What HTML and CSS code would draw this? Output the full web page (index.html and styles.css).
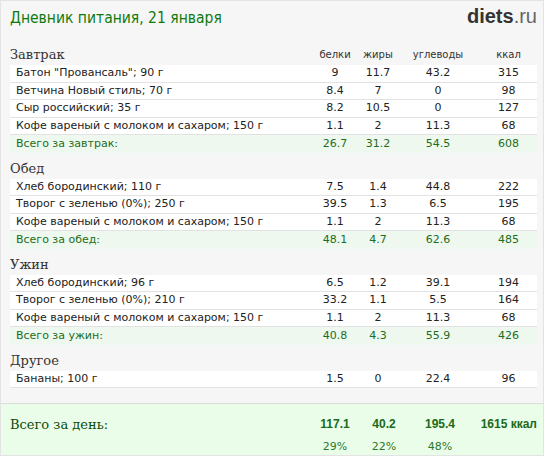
FILE: index.html
```html
<!DOCTYPE html>
<html lang="ru">
<head>
<meta charset="utf-8">
<title>Дневник питания</title>
<link rel="stylesheet" href="styles.css">
</head>
<body>
<div class="page">
  <div class="top">
    <div class="title">Дневник питания, 21 января</div>
    <div class="logo"><b>diets</b>.ru</div>
  </div>

  <div class="meal">
    <div class="head">
      <div class="name">Завтрак</div>
      <div class="col">белки</div><div class="col">жиры</div><div class="col">углеводы</div><div class="col">ккал</div>
    </div>
    <div class="row"><div class="food">Батон "Провансаль"; 90 г</div><div>9</div><div>11.7</div><div>43.2</div><div>315</div></div>
    <div class="row"><div class="food">Ветчина Новый стиль; 70 г</div><div>8.4</div><div>7</div><div>0</div><div>98</div></div>
    <div class="row"><div class="food">Сыр российский; 35 г</div><div>8.2</div><div>10.5</div><div>0</div><div>127</div></div>
    <div class="row"><div class="food">Кофе вареный с молоком и сахаром; 150 г</div><div>1.1</div><div>2</div><div>11.3</div><div>68</div></div>
    <div class="row sum"><div class="food">Всего за завтрак:</div><div>26.7</div><div>31.2</div><div>54.5</div><div>608</div></div>
  </div>

  <div class="meal">
    <div class="head"><div class="name">Обед</div></div>
    <div class="row"><div class="food">Хлеб бородинский; 110 г</div><div>7.5</div><div>1.4</div><div>44.8</div><div>222</div></div>
    <div class="row"><div class="food">Творог с зеленью (0%); 250 г</div><div>39.5</div><div>1.3</div><div>6.5</div><div>195</div></div>
    <div class="row"><div class="food">Кофе вареный с молоком и сахаром; 150 г</div><div>1.1</div><div>2</div><div>11.3</div><div>68</div></div>
    <div class="row sum"><div class="food">Всего за обед:</div><div>48.1</div><div>4.7</div><div>62.6</div><div>485</div></div>
  </div>

  <div class="meal">
    <div class="head"><div class="name">Ужин</div></div>
    <div class="row"><div class="food">Хлеб бородинский; 96 г</div><div>6.5</div><div>1.2</div><div>39.1</div><div>194</div></div>
    <div class="row"><div class="food">Творог с зеленью (0%); 210 г</div><div>33.2</div><div>1.1</div><div>5.5</div><div>164</div></div>
    <div class="row"><div class="food">Кофе вареный с молоком и сахаром; 150 г</div><div>1.1</div><div>2</div><div>11.3</div><div>68</div></div>
    <div class="row sum"><div class="food">Всего за ужин:</div><div>40.8</div><div>4.3</div><div>55.9</div><div>426</div></div>
  </div>

  <div class="meal">
    <div class="head"><div class="name">Другое</div></div>
    <div class="row"><div class="food">Бананы; 100 г</div><div>1.5</div><div>0</div><div>22.4</div><div>96</div></div>
  </div>

  <div class="day">
    <div class="day-label">Всего за день:</div>
    <div class="big">117.1</div><div class="big">40.2</div><div class="big">195.4</div><div class="big kcal">1615 ккал</div>
    <div></div>
    <div class="pct">29%</div><div class="pct">22%</div><div class="pct">48%</div><div></div>
  </div>
</div>
</body>
</html>
```

FILE: styles.css
```css
html, body {
  margin: 0;
  padding: 0;
  background: #ffffff;
}

.page {
  width: 544px;
  box-sizing: border-box;
  border: 1px solid #e3e3e3;
  background: #f6f6f6;
  font-family: "DejaVu Sans", Verdana, sans-serif;
}

.top {
  height: 38px;
  display: flex;
  justify-content: space-between;
  align-items: flex-start;
  padding: 0 6px 0 9px;
}

.title {
  font-family: "DejaVu Sans Condensed", "DejaVu Sans", sans-serif;
  font-size: 15.5px;
  color: #0e7a0e;
  margin-top: 7px;
  line-height: 20px;
}

.logo {
  font-family: "Liberation Sans", Arial, sans-serif;
  font-size: 20px;
  color: #666;
  margin-top: 4px;
  line-height: 22px;
}

.logo b {
  color: #333;
}

.meal {
  padding: 0 6px 0 9px;
}

.head,
.row,
.day {
  display: grid;
  grid-template-columns: 300px 50px 36px 84px 57px;
}

.head {
  height: 26px;
  padding-top: 6px;
  box-sizing: border-box;
  align-items: center;
}

.name {
  font-family: "DejaVu Serif", Georgia, serif;
  font-size: 13px;
  color: #333;
  line-height: 20px;
}

.col {
  font-size: 10px;
  color: #333;
  text-align: center;
  line-height: 20px;
}

.row {
  height: 17.5px;
  box-sizing: border-box;
  background: #fff;
  border-bottom: 1px solid #e2e2e2;
  align-items: center;
  font-size: 11px;
  color: #222;
  text-align: center;
  line-height: 14px;
}

.row .food {
  text-align: left;
  padding-left: 6px;
}

.row.sum {
  background: #eff8ef;
  border-bottom: none;
  color: #1b6e1b;
}

.day {
  margin-top: 15px;
  border-top: 1px solid #dcdcdc;
  background: #eafde9;
  height: 52px;
  box-sizing: border-box;
  padding: 11px 6px 0 9px;
  grid-template-columns: 300px 50px 48px 64px 65px;
  grid-template-rows: 18px 18px;
  row-gap: 4px;
  align-items: center;
}

.day-label {
  font-family: "DejaVu Serif", Georgia, serif;
  font-size: 13px;
  color: #0d4d0d;
}

.big {
  font-family: "Liberation Sans", Arial, sans-serif;
  font-weight: bold;
  font-size: 12px;
  color: #1a6a1a;
  text-align: center;
}

.big.kcal {
  text-align: right;
}

.pct {
  font-size: 11px;
  color: #2a7a2a;
  text-align: center;
}
```
